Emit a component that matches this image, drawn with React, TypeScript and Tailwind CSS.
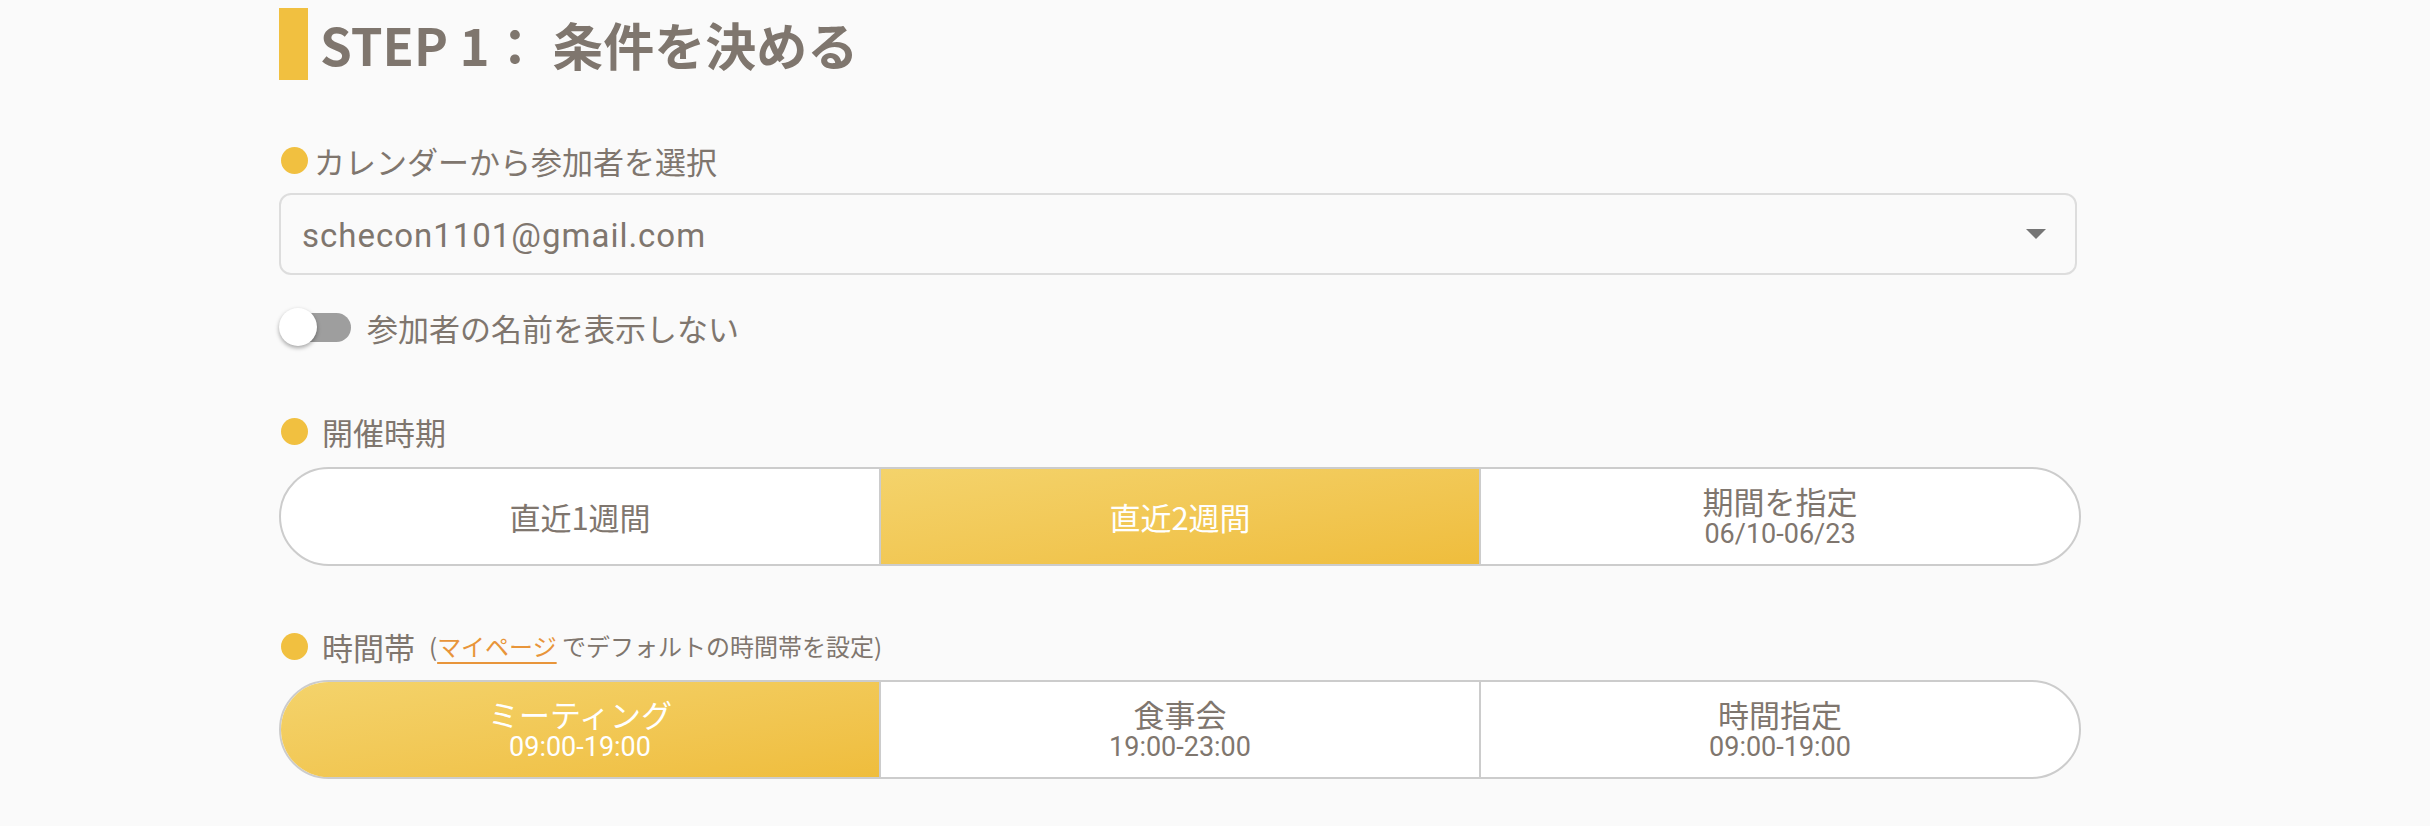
import { useState } from "react"

const periods = [
  { label: "直近1週間" },
  { label: "直近2週間" },
  { label: "期間を指定", sub: "06/10-06/23" },
]

const slots = [
  { label: "ミーティング", sub: "09:00-19:00" },
  { label: "食事会", sub: "19:00-23:00" },
  { label: "時間指定", sub: "09:00-19:00" },
]

type Option = { label: string; sub?: string }

function Segmented({ options, selected, onSelect }: { options: Option[]; selected: number; onSelect: (i: number) => void }) {
  return (
    <div className="flex h-[99px] w-[1802px] overflow-hidden rounded-full border-2 border-[#cccccc] bg-white">
      {options.map((opt, i) => (
        <button
          key={opt.label}
          type="button"
          onClick={() => onSelect(i)}
          className={`flex flex-1 flex-col items-center justify-center ${i > 0 ? "border-l-2 border-[#cccccc]" : ""} ${
            selected === i ? "bg-linear-to-br from-[#f4d36b] to-[#efbd3c] text-white" : "text-[#7f766e]"
          }`}
        >
          <span className="text-[31px] leading-[34px]">{opt.label}</span>
          {opt.sub && (
            <span className="text-[27px] leading-[32px]" style={{ fontFamily: "Roboto, sans-serif" }}>
              {opt.sub}
            </span>
          )}
        </button>
      ))}
    </div>
  )
}

function Dot() {
  return <span className="inline-block h-[27px] w-[27px] shrink-0 rounded-full bg-[#f1c040]" />
}

export default function App() {
  const [hideNames, setHideNames] = useState(false)
  const [period, setPeriod] = useState(1)
  const [slot, setSlot] = useState(0)

  return (
    <main
      className="h-[826px] bg-[#fafafa] pl-[279px] text-[#7f766e]"
      style={{ fontFamily: '"Noto Sans CJK JP", Roboto, sans-serif' }}
    >
      <div className="flex w-[1803px] flex-col">
        <div className="mt-[8px] flex h-[72px] items-center gap-[12px]">
          <span className="h-[72px] w-[29px] bg-[#f1c040]" />
          <h1 className="text-[51px] font-bold leading-none">STEP 1： 条件を決める</h1>
        </div>

        <div className="mt-[64px] flex h-[32px] items-center gap-[6px] pl-[2px]">
          <Dot />
          <span className="text-[31px] leading-none">カレンダーから参加者を選択</span>
        </div>

        <div className="mt-[17px] flex h-[82px] w-[1798px] items-center justify-between rounded-[12px] border-2 border-[#dddddd] pl-[21px] pr-[29px]">
          <span className="pt-[4px] text-[33px] tracking-[0.03em]" style={{ fontFamily: "Roboto, sans-serif" }}>
            schecon1101@gmail.com
          </span>
          <svg width="20" height="10" viewBox="0 0 20 10">
            <path d="M0 0 L20 0 L10 10 Z" fill="#757575" />
          </svg>
        </div>

        <div className="mt-[32px] flex h-[40px] items-center gap-[15px]">
          <button type="button" onClick={() => setHideNames(!hideNames)} className="relative h-[40px] w-[73px]">
            <span className="absolute left-[10px] top-[6px] h-[29px] w-[62px] rounded-full bg-[#9e9e9e]" />
            <span
              className={`absolute top-[1px] h-[38px] w-[38px] rounded-full bg-white shadow-[0_2px_4px_rgba(0,0,0,0.35)] ${
                hideNames ? "left-[35px]" : "left-0"
              }`}
            />
          </button>
          <span className="text-[31px] leading-none">参加者の名前を表示しない</span>
        </div>

        <div className="mt-[68px] flex h-[32px] items-center gap-[14px] pl-[2px]">
          <Dot />
          <span className="text-[31px] leading-none">開催時期</span>
        </div>

        <div className="mt-[20px]">
          <Segmented options={periods} selected={period} onSelect={setPeriod} />
        </div>

        <div className="mt-[63px] flex h-[34px] items-center gap-[14px] pl-[2px]">
          <Dot />
          <span className="text-[31px] leading-none">時間帯</span>
          <span className="text-[24px] leading-none">
            (
            <a href="#" className="text-[#e8953a] underline decoration-2 underline-offset-[6px]">
              マイページ
            </a>{" "}
            でデフォルトの時間帯を設定)
          </span>
        </div>

        <div className="mt-[17px]">
          <Segmented options={slots} selected={slot} onSelect={setSlot} />
        </div>
      </div>
    </main>
  )
}
